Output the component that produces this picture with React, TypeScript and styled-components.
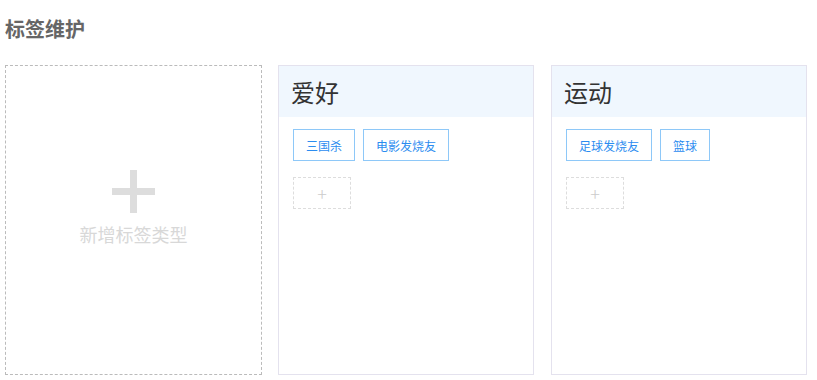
import React from 'react';
import styled, { createGlobalStyle } from 'styled-components';

const GlobalStyle = createGlobalStyle`
    body {
        margin: 0;
        background: #fff;
        font-family: "Noto Sans CJK SC", "Noto Sans", sans-serif;
    }
`;

const Page = styled.div`
    padding: 15px 5px 0;
`;

const Title = styled.h2`
    margin: 0 0 22px;
    font-size: 20px;
    line-height: 28px;
    font-weight: bold;
    color: #666;
`;

const CardRow = styled.div`
    display: flex;
    gap: 17px;
`;

const AddCard = styled.div`
    width: 257px;
    height: 310px;
    margin-right: -1px;
    box-sizing: border-box;
    border: 1px dashed #bbb;
    display: flex;
    flex-direction: column;
    align-items: center;
    justify-content: center;
    padding-bottom: 24px;
    cursor: pointer;
`;

const BigPlus = styled.div`
    position: relative;
    width: 43px;
    height: 43px;
    &::before, &::after {
        content: '';
        position: absolute;
        background: #ddd;
    }
    &::before {
        left: 18px;
        top: 0;
        width: 7px;
        height: 43px;
    }
    &::after {
        top: 18px;
        left: 0;
        width: 43px;
        height: 7px;
    }
`;

const AddText = styled.div`
    margin-top: 8px;
    font-size: 18px;
    line-height: 26px;
    color: #d8d8d8;
`;

const Card = styled.div`
    width: 256px;
    height: 310px;
    box-sizing: border-box;
    border: 1px solid #e4e2ee;
`;

const CardHeader = styled.div`
    height: 51px;
    background: #f0f7fe;
    display: flex;
    align-items: center;
    padding: 0 12px;
    font-size: 24px;
    color: #333;
`;

const CardBody = styled.div`
    padding: 12px 14px;
`;

const TagList = styled.div`
    display: flex;
    flex-wrap: wrap;
    gap: 8px;
`;

const Tag = styled.div`
    height: 32px;
    box-sizing: border-box;
    padding: 0 12px;
    border: 1px solid #8ec8f8;
    color: #2b8cf0;
    font-size: 12px;
    display: flex;
    align-items: center;
`;

const AddTag = styled.div`
    margin-top: 16px;
    width: 58px;
    height: 32px;
    box-sizing: border-box;
    border: 1px dashed #ddd;
    color: #ccc;
    font-size: 18px;
    display: flex;
    align-items: center;
    justify-content: center;
    font-weight: 300;
`;

const tagGroups = [
    { name: '爱好', tags: ['三国杀', '电影发烧友'] },
    { name: '运动', tags: ['足球发烧友', '篮球'] },
];

const App: React.FC = () => {
    return (<React.Fragment>
        <GlobalStyle />
        <Page>
            <Title>标签维护</Title>
            <CardRow>
                <AddCard>
                    <BigPlus />
                    <AddText>新增标签类型</AddText>
                </AddCard>
                {tagGroups.map((group) => (<Card key={group.name}>
                    <CardHeader>{group.name}</CardHeader>
                    <CardBody>
                        <TagList>
                            {group.tags.map((tag) => <Tag key={tag}>{tag}</Tag>)}
                        </TagList>
                        <AddTag>+</AddTag>
                    </CardBody>
                </Card>))}
            </CardRow>
        </Page>
    </React.Fragment>);
}

export default App;
